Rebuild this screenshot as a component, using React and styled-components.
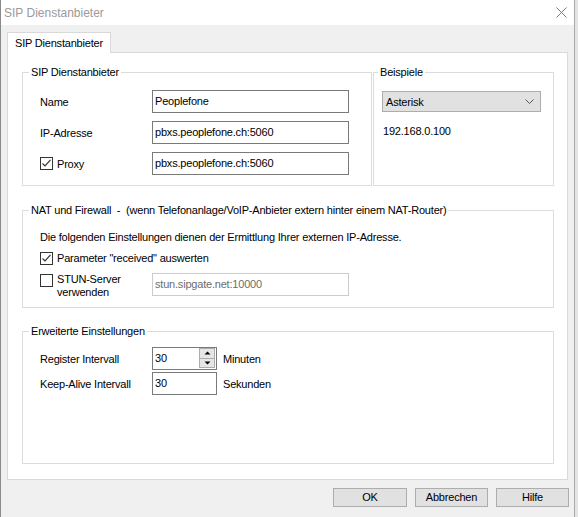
import React from 'react';
import styled, { createGlobalStyle } from 'styled-components';

const GlobalStyle = createGlobalStyle`
  html, body {
    margin: 0;
    padding: 0;
  }
  body {
    width: 578px;
    height: 517px;
    overflow: hidden;
    background: #e4e4e4;
    font-family: "Liberation Sans", Arial, sans-serif;
    font-size: 11px;
    letter-spacing: -0.2px;
    color: #000;
  }
  * {
    box-sizing: border-box;
  }
`

const Window = styled.div`
  width: 575px;
  height: 517px;
  display: flex;
  flex-direction: column;
  background: #f0f0f0;
  border-left: 1px solid #8a8a8a;
  border-right: 1px solid #a9a9a9;
`
const TitleBar = styled.div`
  height: 25px;
  flex: none;
  background: #fff;
  display: flex;
  align-items: center;
  justify-content: space-between;
  padding: 0 7px 0 3px;
  color: #9a9a9a;
  font-size: 12px;
  letter-spacing: 0;
  svg {
    display: block;
  }
`
const Body = styled.div`
  flex: 1;
  display: flex;
  flex-direction: column;
  padding: 7px 6px 0 6px;
`
const TabStrip = styled.div`
  display: flex;
`
const Tab = styled.div`
  width: 104px;
  height: 21px;
  margin-bottom: -1px;
  padding-left: 7px;
  line-height: 20px;
  white-space: nowrap;
  background: #fff;
  border: 1px solid #d9d9d9;
  border-bottom: none;
  position: relative;
  z-index: 1;
`
const Panel = styled.div`
  height: 428px;
  display: flex;
  flex-direction: column;
  background: #fff;
  border: 1px solid #d9d9d9;
  padding: 12px 13px 15px 14px;
`
const TopRow = styled.div`
  display: flex;
  gap: 1px;
`
const Group = styled.fieldset`
  margin: 0;
  padding: 0;
  min-width: 0;
  border: 1px solid #dcdcdc;
  width: ${p => p.$width ? p.$width + 'px' : 'auto'};
  margin-top: ${p => p.$top || 0}px;
  flex: ${p => p.$grow ? 1 : 'none'};
`
const GroupBody = styled.div`
  padding: ${p => p.$pad};
`
const Legend = styled.legend`
  padding: 0 2px;
  margin-left: ${p => p.$offset ?? 6}px;
  line-height: 14px;
  white-space: nowrap;
`
const FormGrid = styled.div`
  display: grid;
  grid-template-columns: 112px auto;
  grid-auto-rows: 23px;
  row-gap: ${p => p.$gap}px;
  align-items: center;
`
const Label = styled.span`
  display: flex;
  align-items: center;
  gap: 4px;
`
const TextInput = styled.div`
  width: ${p => p.$width || 197}px;
  height: 23px;
  border: 1px solid ${p => p.$disabled ? '#cccccc' : '#7a7a7a'};
  color: ${p => p.$disabled ? '#6d6d6d' : '#000'};
  background: #fff;
  padding: 0 2px;
  line-height: 20px;
  white-space: nowrap;
`
const Box = styled.span`
  width: 13px;
  height: 13px;
  flex: none;
  border: 1px solid #333;
  background: #fff;
  display: flex;
  svg {
    display: block;
  }
`
const Select = styled.div`
  width: 159px;
  height: 21px;
  background: #e1e1e1;
  border: 1px solid #adadad;
  display: flex;
  align-items: center;
  justify-content: space-between;
  padding: 0 6px 0 3px;
`
const Plain = styled.div`
  line-height: 14px;
  margin-top: ${p => p.$top || 0}px;
  padding-left: ${p => p.$left || 0}px;
`
const CheckRow = styled.div`
  display: flex;
  align-items: center;
  gap: 4px;
  line-height: 14px;
  margin-top: ${p => p.$mt || 0}px;
`
const StunRow = styled.div`
  display: grid;
  grid-template-columns: 112px auto;
  margin-top: 8px;
`
const StunLabel = styled.div`
  display: flex;
  align-items: flex-start;
  gap: 4px;
  line-height: 13px;
  ${Box} {
    margin-top: 1px;
  }
`
const SpinField = styled.div`
  width: 65px;
  height: 23px;
  border: 1px solid #7a7a7a;
  display: flex;
  background: #fff;
`
const SpinText = styled.span`
  flex: 1;
  padding-left: 2px;
  line-height: 20px;
`
const SpinButtons = styled.div`
  width: 17px;
  display: flex;
  flex-direction: column;
  padding: 0 1px 1px 0;
`
const SpinButton = styled.div`
  flex: 1;
  border: 1px solid #adadad;
  background: #e6e6e6;
  display: flex;
  align-items: center;
  justify-content: center;
  & + & {
    border-top: none;
  }
  svg {
    display: block;
  }
`
const Unit = styled.span`
  margin-left: 6px;
`
const ValueRow = styled.div`
  display: flex;
  align-items: center;
`
const Footer = styled.div`
  display: flex;
  justify-content: flex-end;
  gap: 8px;
  padding-top: 8px;
  margin-right: -1px;
`
const Button = styled.div`
  width: ${p => p.$width || 73}px;
  height: 19px;
  background: #e1e1e1;
  border: 1px solid #adadad;
  text-align: center;
  line-height: 17px;
`

function Check({ checked }) {
  return (
    <Box>
      {checked && (
        <svg width="11" height="11" viewBox="0 0 11 11">
          <path d="M1.5 5.5 L4 8 L9.5 1.8" fill="none" stroke="#333" strokeWidth="1.2" />
        </svg>
      )}
    </Box>
  );
}

function Arrow({ down }) {
  return (
    <svg width="7" height="4" viewBox="0 0 7 4">
      <path d={down ? 'M0.5 0.5 H6.5 L3.5 3.5 Z' : 'M0.5 3.5 H6.5 L3.5 0.5 Z'} fill="#000" />
    </svg>
  );
}

export default function App() {
  return (
    <Window>
      <GlobalStyle />
      <TitleBar>
        <span>SIP Dienstanbieter</span>
        <svg width="11" height="11" viewBox="0 0 11 11">
          <path d="M0.5 0.5 L10.5 10.5 M10.5 0.5 L0.5 10.5" stroke="#7a7a7a" strokeWidth="1" />
        </svg>
      </TitleBar>
      <Body>
        <TabStrip>
          <Tab>SIP Dienstanbieter</Tab>
        </TabStrip>
        <Panel>
          <TopRow>
            <Group $width={350}>
              <Legend>SIP Dienstanbieter</Legend>
              <GroupBody $pad="11px 0 10px 17px">
                <FormGrid $gap={8}>
                  <Label>Name</Label>
                  <TextInput>Peoplefone</TextInput>
                  <Label>IP-Adresse</Label>
                  <TextInput>pbxs.peoplefone.ch:5060</TextInput>
                  <Label><Check checked />Proxy</Label>
                  <TextInput>pbxs.peoplefone.ch:5060</TextInput>
                </FormGrid>
              </GroupBody>
            </Group>
            <Group $width={181}>
              <Legend $offset={4}>Beispiele</Legend>
              <GroupBody $pad="12px 0 0 8px">
                <Select>
                  <span>Asterisk</span>
                  <svg width="9" height="6" viewBox="0 0 9 6">
                    <path d="M0.5 0.5 L4.5 4.5 L8.5 0.5" fill="none" stroke="#555" strokeWidth="1" />
                  </svg>
                </Select>
                <Plain $top={12} $left={1}>192.168.0.100</Plain>
              </GroupBody>
            </Group>
          </TopRow>

          <Group $top={17}>
            <Legend>NAT und Firewall&nbsp; - &nbsp;(wenn Telefonanlage/VoIP-Anbieter extern hinter einem NAT-Router)</Legend>
            <GroupBody $pad="13px 0 8px 17px">
              <Plain>Die folgenden Einstellungen dienen der Ermittlung Ihrer externen IP-Adresse.</Plain>
              <CheckRow $mt={7}>
                <Check checked />
                <span>Parameter "received" auswerten</span>
              </CheckRow>
              <StunRow>
                <StunLabel>
                  <Check />
                  <span>STUN-Server<br />verwenden</span>
                </StunLabel>
                <TextInput $disabled>stun.sipgate.net:10000</TextInput>
              </StunRow>
            </GroupBody>
          </Group>

          <Group $top={16} $grow>
            <Legend>Erweiterte Einstellungen</Legend>
            <GroupBody $pad="9px 0 0 17px">
              <FormGrid $gap={2}>
                <Label>Register Intervall</Label>
                <ValueRow>
                  <SpinField>
                    <SpinText>30</SpinText>
                    <SpinButtons>
                      <SpinButton><Arrow /></SpinButton>
                      <SpinButton><Arrow down /></SpinButton>
                    </SpinButtons>
                  </SpinField>
                  <Unit>Minuten</Unit>
                </ValueRow>
                <Label>Keep-Alive Intervall</Label>
                <ValueRow>
                  <TextInput $width={65}>30</TextInput>
                  <Unit>Sekunden</Unit>
                </ValueRow>
              </FormGrid>
            </GroupBody>
          </Group>
        </Panel>
        <Footer>
          <Button $width={74}>OK</Button>
          <Button>Abbrechen</Button>
          <Button>Hilfe</Button>
        </Footer>
      </Body>
    </Window>
  );
}
